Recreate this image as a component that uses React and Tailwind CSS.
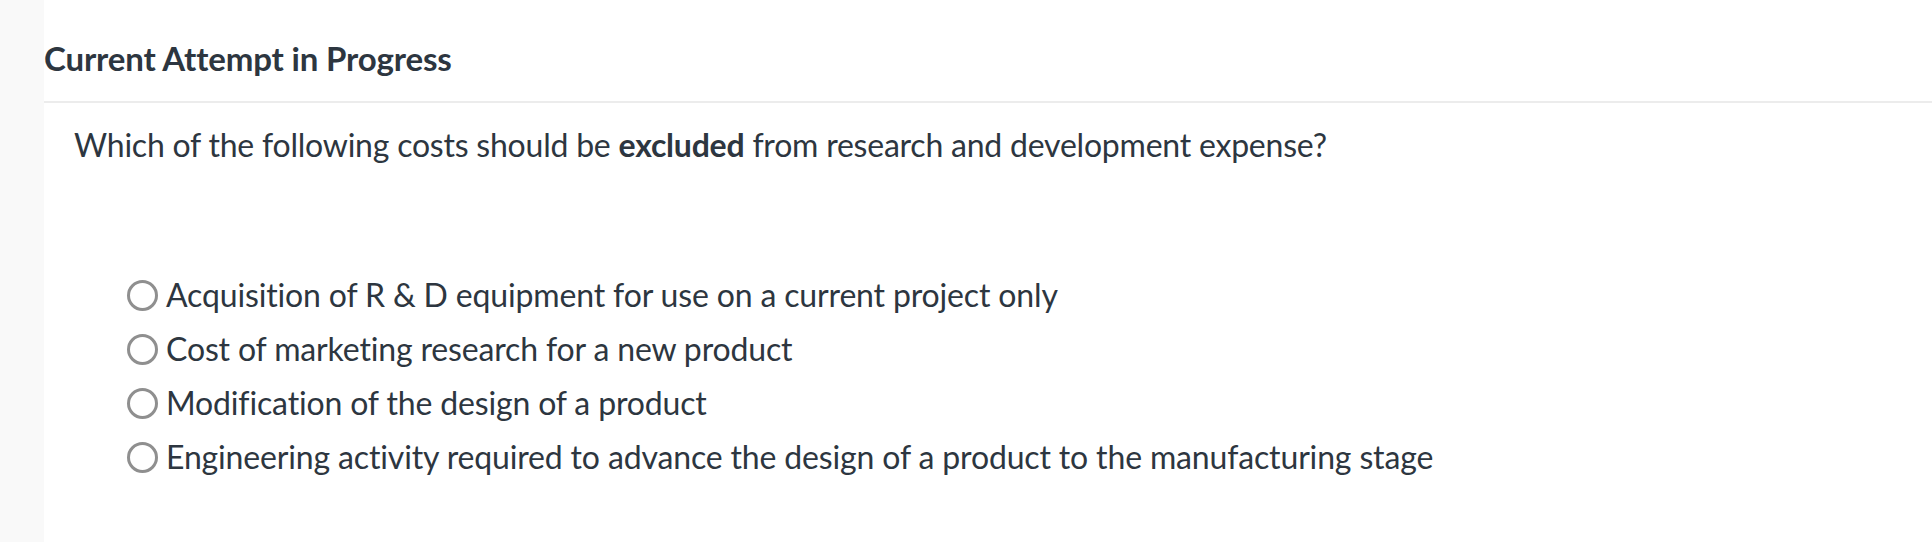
const options = [
  "Acquisition of R & D equipment for use on a current project only",
  "Cost of marketing research for a new product",
  "Modification of the design of a product",
  "Engineering activity required to advance the design of a product to the manufacturing stage",
];

function Radio() {
  return (
    <span className="w-[31px] h-[31px] rounded-full border-[3px] border-[#8f8f8f] bg-white shrink-0" />
  );
}

export default function App() {
  return (
    <div className="flex w-full h-[542px] bg-white text-[#2d3640] font-['Lato',sans-serif]">
      <div className="w-[44px] bg-[#f9f9f9] shrink-0" />

      <div className="flex-1">
        <div className="pt-[40px] pb-[25px] border-b-2 border-[#ececec]">
          <h2 className="text-[33px] leading-[36px] font-bold tracking-[-0.15px]">Current Attempt in Progress</h2>
        </div>

        <p className="pl-[30px] pt-[24px] text-[32px] leading-[36px] tracking-[-0.22px]">
          Which of the following costs should be <b className="font-bold">excluded</b> from research and development expense?
        </p>

        <div className="pl-[83px] pt-[105px] flex flex-col">
          {options.map((opt) => (
            <label key={opt} className="flex items-center gap-[8px] h-[54px] text-[32px] tracking-[-0.15px]">
              <Radio />
              <span>{opt}</span>
            </label>
          ))}
        </div>
      </div>
    </div>
  );
}
